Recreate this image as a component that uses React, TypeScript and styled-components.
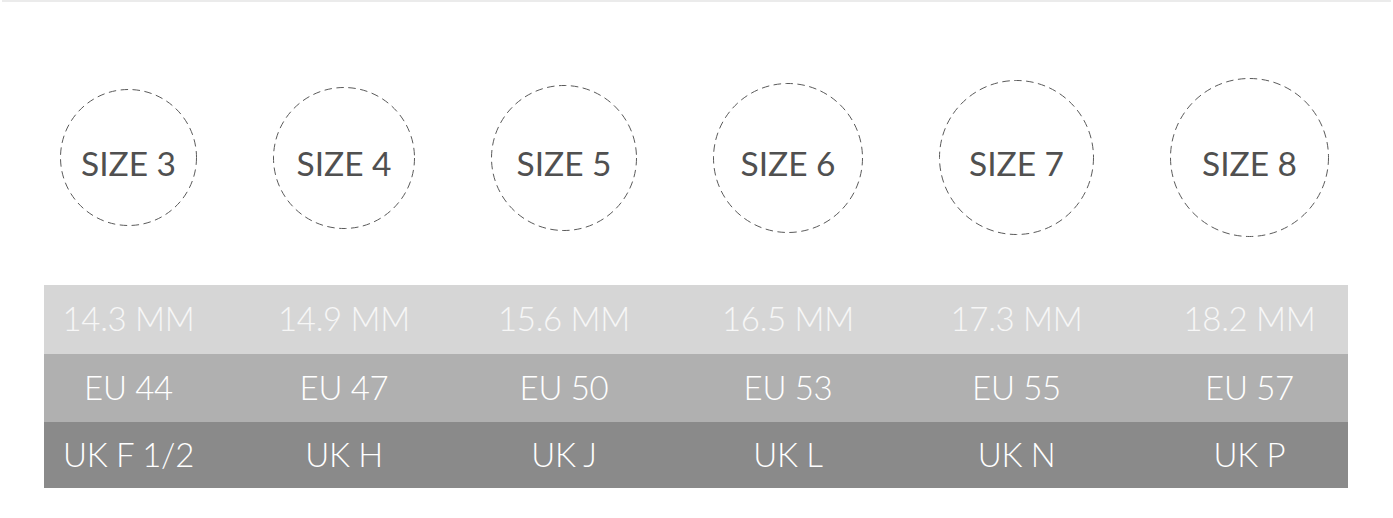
import styled, { createGlobalStyle } from 'styled-components'

/* ── Data ── */
const sizes = [
  { label: 'SIZE 3', d: 137, mm: '14.3 MM', eu: 'EU 44', uk: 'UK F 1/2' },
  { label: 'SIZE 4', d: 142, mm: '14.9 MM', eu: 'EU 47', uk: 'UK H' },
  { label: 'SIZE 5', d: 146, mm: '15.6 MM', eu: 'EU 50', uk: 'UK J' },
  { label: 'SIZE 6', d: 150, mm: '16.5 MM', eu: 'EU 53', uk: 'UK L' },
  { label: 'SIZE 7', d: 155, mm: '17.3 MM', eu: 'EU 55', uk: 'UK N' },
  { label: 'SIZE 8', d: 159, mm: '18.2 MM', eu: 'EU 57', uk: 'UK P' },
]

const rows = [
  { key: 'mm' as const, bg: '#d6d6d6', fg: '#f7f7f7', h: 69 },
  { key: 'eu' as const, bg: '#b0b0b0', fg: '#ffffff', h: 68 },
  { key: 'uk' as const, bg: '#8a8a8a', fg: '#ffffff', h: 66 },
]

/* ── Styled ── */
const Global = createGlobalStyle`
  body {
    margin: 0;
    background: #ffffff;
    font-family: Lato, "Open Sans", sans-serif;
  }
`

const Page = styled.div`
  margin: 0 2px;
  border-top: 2px solid #ebebeb;
  padding: 0 0 0 42px;
  height: 516px;
  box-sizing: border-box;
`

const CircleRow = styled.div`
  display: flex;
  align-items: center;
  gap: 76px;
  height: 159px;
  margin-top: 76px;
  padding-left: 16px;
`

const Circle = styled.div<{ $d: number }>`
  position: relative;
  width: ${({ $d }) => $d}px;
  height: ${({ $d }) => $d}px;
  flex: none;
  box-sizing: border-box;
  display: flex;
  align-items: center;
  justify-content: center;
  padding-top: 11px;
  font-size: 33.5px;
  color: #505050;
  white-space: nowrap;
`

const Ring = styled.svg`
  position: absolute;
  inset: 0;
  width: 100%;
  height: 100%;
`

const Table = styled.div`
  width: 1304px;
  margin-top: 48px;
  display: flex;
  flex-direction: column;
`

const Row = styled.div<{ $bg: string; $fg: string; $h: number }>`
  display: flex;
  align-items: center;
  gap: 76px;
  padding-left: 16px;
  height: ${({ $h }) => $h}px;
  background: ${({ $bg }) => $bg};
  color: ${({ $fg }) => $fg};
`

const Cell = styled.div<{ $w: number }>`
  width: ${({ $w }) => $w}px;
  flex: none;
  display: flex;
  justify-content: center;
  padding-bottom: 3px;
  white-space: nowrap;
  font-size: 33px;
  font-weight: 300;
  letter-spacing: -0.3px;
`

/* ── Component ── */
function SizeCircle({ label, d }: { label: string; d: number }) {
  const r = d / 2 - 0.5
  return (
    <Circle $d={d}>
      <Ring viewBox={`0 0 ${d} ${d}`}>
        <circle
          cx={d / 2}
          cy={d / 2}
          r={r}
          fill="none"
          stroke="#5a5a5a"
          strokeWidth="1"
          strokeDasharray="7.5 4.5"
        />
      </Ring>
      {label}
    </Circle>
  )
}

export default function App() {
  return (
    <>
      <Global />
      <Page>
        <CircleRow>
          {sizes.map((s) => (
            <SizeCircle key={s.label} label={s.label} d={s.d} />
          ))}
        </CircleRow>

        <Table>
          {rows.map((r) => (
            <Row key={r.key} $bg={r.bg} $fg={r.fg} $h={r.h}>
              {sizes.map((s) => (
                <Cell key={s.label} $w={s.d}>
                  {s[r.key]}
                </Cell>
              ))}
            </Row>
          ))}
        </Table>
      </Page>
    </>
  )
}
